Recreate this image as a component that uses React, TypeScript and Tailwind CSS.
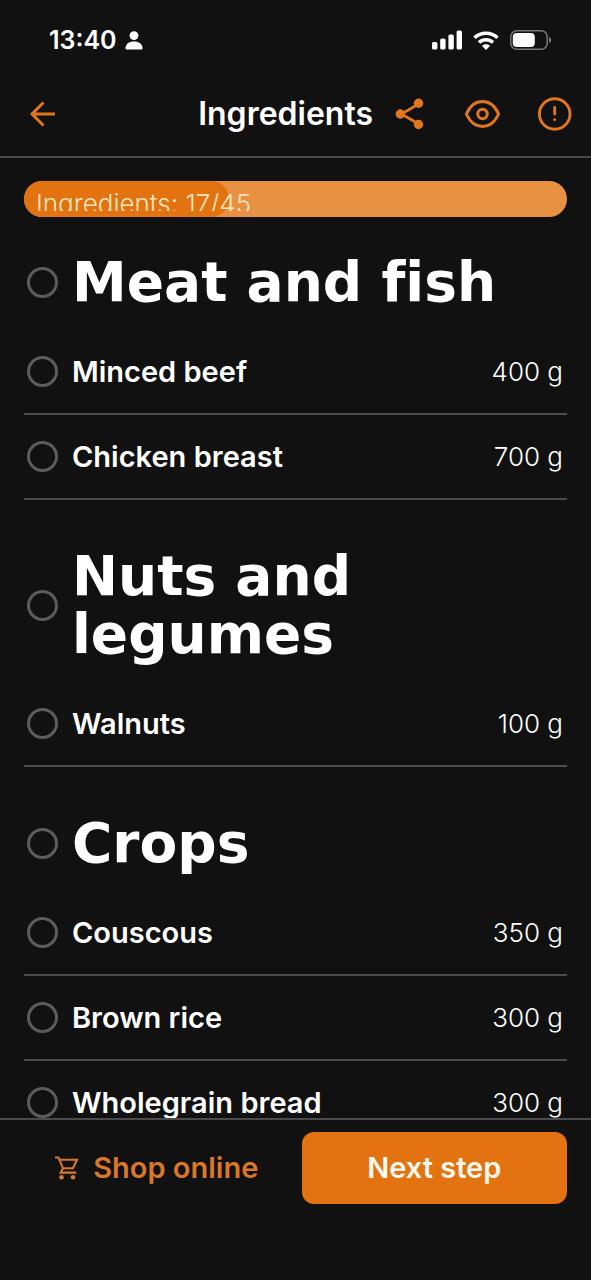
import React, { useState } from "react";

type Item = { name: string; amount: string };
type Group = { title: string; items: Item[] };

const groups: Group[] = [
  {
    title: "Meat and fish",
    items: [
      { name: "Minced beef", amount: "400 g" },
      { name: "Chicken breast", amount: "700 g" },
    ],
  },
  {
    title: "Nuts and legumes",
    items: [{ name: "Walnuts", amount: "100 g" }],
  },
  {
    title: "Crops",
    items: [
      { name: "Couscous", amount: "350 g" },
      { name: "Brown rice", amount: "300 g" },
      { name: "Wholegrain bread", amount: "300 g" },
    ],
  },
];

const collected = 17;
const total = 45;

const StatusBar: React.FC = () => (
  <div className="flex h-20 shrink-0 items-center justify-between pl-[49px] pr-[39px] text-white">
    <div className="flex items-center gap-2">
      <span className="text-[25px] font-semibold leading-8">13:40</span>
      <svg viewBox="0 0 18 19" className="h-[19px] w-[18px]" fill="currentColor" aria-hidden="true">
        <circle cx="9" cy="4.6" r="4.4" />
        <path d="M0.5 17.2C0.5 13.2 4 10.6 9 10.6s8.500 2.600 8.500 6.600c0 .9-.5 1.300-1.400 1.300H1.900C1 18.500.5 18.100.5 17.200Z" />
      </svg>
    </div>
    <div className="flex items-center gap-[11px]">
      <svg viewBox="0 0 30 20" className="h-5 w-[30px]" fill="currentColor" aria-hidden="true">
        <rect x="0" y="12" width="5.4" height="7.500" rx="1.600" />
        <rect x="8.200" y="8.500" width="5.400" height="11" rx="1.600" />
        <rect x="16.400" y="4.500" width="5.400" height="15" rx="1.600" />
        <rect x="24.600" y="0.500" width="5.400" height="19" rx="1.600" />
      </svg>
      <svg viewBox="0 0 26 19" className="h-[19px] w-[26px]" aria-hidden="true">
        <g fill="none" stroke="currentColor" strokeWidth="3.600">
          <path d="M1.500 6.700C8 .7 18 .7 24.500 6.700" />
          <path d="M6 11.500C10 7.900 16 7.900 20 11.500" />
        </g>
        <path d="M13 18.900l-4.100-4.100c2.300-2.100 5.900-2.100 8.200 0Z" fill="currentColor" />
      </svg>
      <svg viewBox="0 0 42 20" className="h-5 w-[42px]" aria-hidden="true">
        <rect x="0.800" y="0.800" width="36.400" height="18.400" rx="6" fill="none" stroke="#77777a" strokeWidth="1.500" />
        <rect x="2.800" y="2.900" width="22" height="14.200" rx="4" fill="currentColor" />
        <path d="M39 7c1.500.4 2.200 1.500 2.200 3s-.7 2.600-2.200 3Z" fill="#77777a" />
      </svg>
    </div>
  </div>
);

const NavBar: React.FC = () => (
  <header className="flex h-[78px] shrink-0 items-center border-b-2 border-[#4b4b4b] pb-2 pl-6 pr-[18px] text-[#e0771f]">
    <button type="button" aria-label="Back">
      <svg viewBox="0 0 36 36" className="size-9" fill="none" stroke="currentColor" strokeWidth="3" aria-hidden="true">
        <path d="M31 18H8.500M19.500 6.500 8 18l11.500 11.500" />
      </svg>
    </button>
    <h1 className="ml-auto mr-5 text-[32px] font-semibold leading-10 text-white">
      Ingredients
    </h1>
    <div className="flex items-center gap-9">
      <button type="button" aria-label="Share">
        <svg viewBox="0 0 36 36" className="size-9" fill="currentColor" aria-hidden="true">
          <path d="M26.500 7.500 8.500 18l18 10.500" fill="none" stroke="currentColor" strokeWidth="2.800" />
          <circle cx="7.300" cy="18" r="4.700" />
          <circle cx="25.500" cy="7.200" r="4.700" />
          <circle cx="25.500" cy="28.500" r="4.700" />
        </svg>
      </button>
      <button type="button" aria-label="Preview">
        <svg viewBox="0 0 36 36" className="size-9" fill="none" stroke="currentColor" strokeWidth="3" strokeLinejoin="round" aria-hidden="true">
          <path d="M1.400 18C5 10 10.500 5.600 17.500 5.600S30 10 33.600 18C30 26 24.500 30.400 17.500 30.400S5 26 1.400 18Z" />
          <circle cx="17.500" cy="18" r="4.700" />
        </svg>
      </button>
      <button type="button" aria-label="Info">
        <svg viewBox="0 0 36 36" className="size-9" fill="none" stroke="currentColor" strokeWidth="2.900" strokeLinecap="round" aria-hidden="true">
          <circle cx="17.700" cy="18" r="15.300" />
          <path d="M17.700 11.500v6.500M17.700 23.600v.2" />
        </svg>
      </button>
    </div>
  </header>
);

const Progress: React.FC = () => (
  <div className="relative mb-9 h-9 overflow-hidden rounded-full bg-[#e89143]">
    <div
      className="h-full rounded-full bg-[#e27310]"
      style={{ width: `${(collected / total) * 100}%` }}
    />
    <p className="absolute inset-x-3 top-2 h-[22px] overflow-hidden text-[26px] font-light leading-[30px] text-[#ffe6bd]">
      Ingredients: {collected}/{total}
    </p>
  </div>
);

const checkClass =
  "size-[31px] shrink-0 cursor-pointer appearance-none rounded-full border-[3px] border-[#5c5c5c] checked:border-[#e27310] checked:bg-[#e27310]";

const App: React.FC = () => {
  const [checked, setChecked] = useState<string[]>([]);

  const toggle = (names: string[], on: boolean) => {
    setChecked((prev) => {
      const rest = prev.filter((name) => !names.includes(name));
      return on ? [...rest, ...names] : rest;
    });
  };

  return (
    <div className="flex h-screen flex-col bg-[#111111] font-['Inter',sans-serif] text-white">
      <StatusBar />
      <NavBar />

      <main className="min-h-0 flex-1 overflow-y-auto px-6 pt-[23px] [scrollbar-width:none]">
        <Progress />
        <div className="space-y-[47px]">
          {groups.map((group) => {
            const names = group.items.map((item) => item.name);
            return (
              <section key={group.title}>
                <h2 className="mb-[19px]">
                  <label className="flex items-center gap-[14px] pl-[3px] font-['DejaVu_Sans',sans-serif] text-[55px] font-bold leading-[58px] [font-variant-ligatures:none]">
                    <input
                      type="checkbox"
                      className={checkClass}
                      checked={names.every((name) => checked.includes(name))}
                      onChange={(e) => toggle(names, e.target.checked)}
                    />
                    {group.title}
                  </label>
                </h2>
                <ul>
                  {group.items.map((item) => (
                    <li key={item.name} className="border-b-2 border-[#4b4b4b]">
                      <label className="flex h-[83px] items-center gap-[14px] pl-[3px] pr-1">
                        <input
                          type="checkbox"
                          className={checkClass}
                          checked={checked.includes(item.name)}
                          onChange={(e) => toggle([item.name], e.target.checked)}
                        />
                        <span className="flex-1 text-[29px] font-semibold leading-9">
                          {item.name}
                        </span>
                        <span className="text-[26px] font-light leading-9">
                          {item.amount}
                        </span>
                      </label>
                    </li>
                  ))}
                </ul>
              </section>
            );
          })}
        </div>
      </main>

      <footer className="grid shrink-0 grid-cols-2 gap-3 border-t-2 border-[#4b4b4b] px-6 pb-[76px] pt-3 text-[29px] font-semibold leading-9">
        <button type="button" className="flex h-[72px] items-center justify-center gap-[14px] text-[#d9772a]">
          <svg viewBox="0 0 24 24" className="size-6" fill="none" stroke="currentColor" strokeWidth="2.100" aria-hidden="true">
            <path d="M0 1.500h3.500L8 12.300h10L22 3.800H4.500M8 12.300l-2.300 4.300h15.600" />
            <circle cx="6.500" cy="21.200" r="2.300" fill="currentColor" stroke="none" />
            <circle cx="18" cy="21.200" r="2.300" fill="currentColor" stroke="none" />
          </svg>
          Shop online
        </button>
        <button type="button" className="h-[72px] rounded-xl bg-[#e27310] text-[#fff8ec]">
          Next step
        </button>
      </footer>
    </div>
  );
};

export default App;
